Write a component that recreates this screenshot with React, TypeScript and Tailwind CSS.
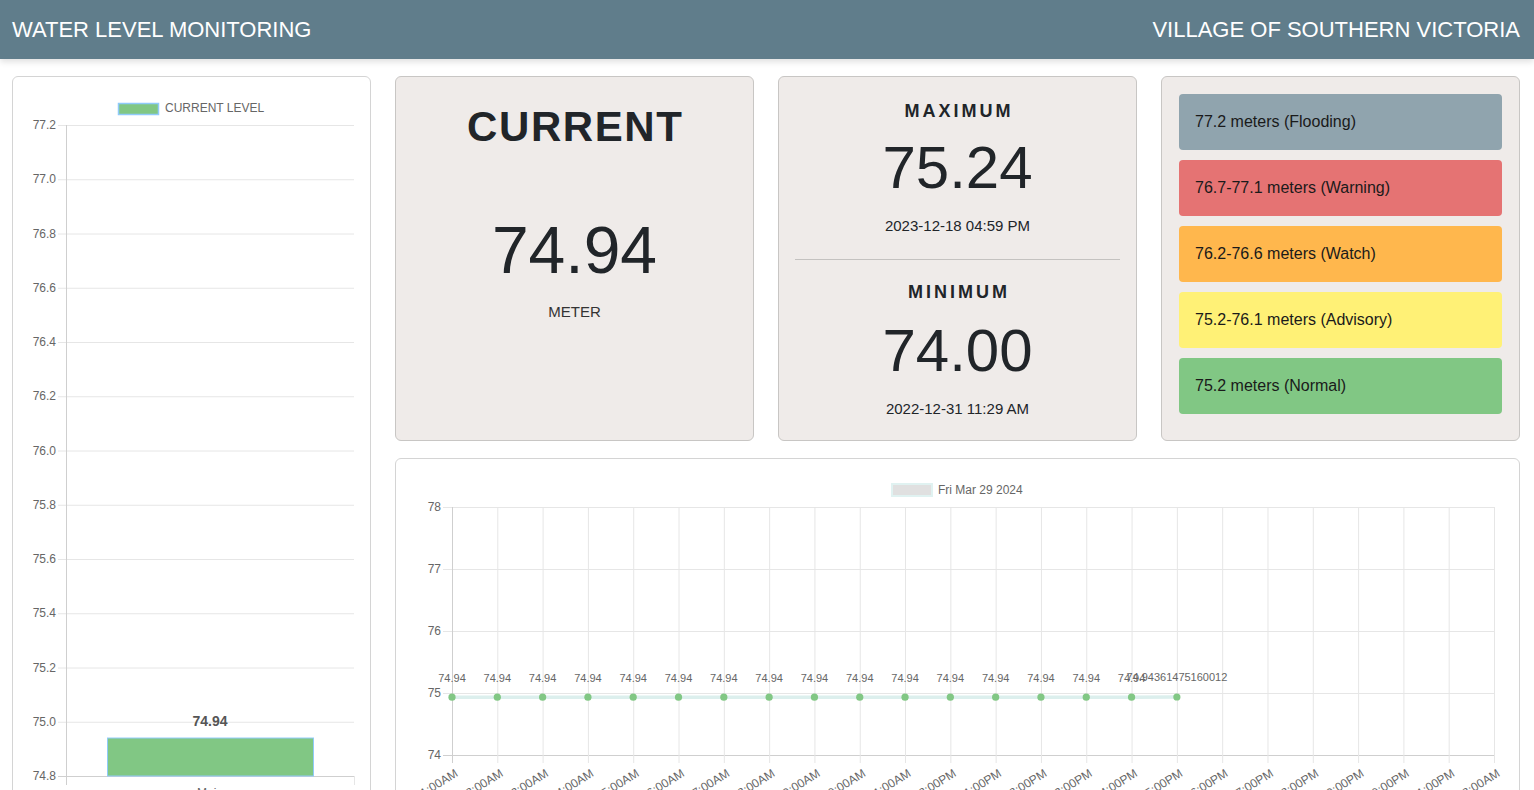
import React from "react";

const levels = [
    { label: "77.2 meters (Flooding)", color: "bg-[#90a4ae]" },
    { label: "76.7-77.1 meters (Warning)", color: "bg-[#e57373]" },
    { label: "76.2-76.6 meters (Watch)", color: "bg-[#ffb74d]" },
    { label: "75.2-76.1 meters (Advisory)", color: "bg-[#fff176]" },
    { label: "75.2 meters (Normal)", color: "bg-[#81c784]" },
];

const hours = [
    "1:00AM", "2:00AM", "3:00AM", "4:00AM", "5:00AM", "6:00AM", "7:00AM", "8:00AM",
    "9:00AM", "10:00AM", "11:00AM", "12:00PM", "1:00PM", "2:00PM", "3:00PM", "4:00PM",
    "5:00PM", "6:00PM", "7:00PM", "8:00PM", "9:00PM", "10:00PM", "11:00PM", "12:00AM",
];

// readings for the day so far
const readings = [
    74.94, 74.94, 74.94, 74.94, 74.94, 74.94, 74.94, 74.94, 74.94, 74.94, 74.94, 74.94,
    74.94, 74.94, 74.94, 74.94, 74.94361475160012,
];

function CurrentLevelChart() {
    const ticks = ["77.2", "77.0", "76.8", "76.6", "76.4", "76.2", "76.0", "75.8", "75.6", "75.4", "75.2", "75.0", "74.8"];
    const top = 48;
    const step = 54.25;
    const bottom = top + step * 12;
    const barTop = bottom - ((74.94 - 74.8) / 0.2) * step;

    return (
        <svg width="357" height="740" className="block">
            {/* legend */}
            <rect x="105.5" y="26.5" width="40" height="11" fill="#81c784" stroke="#90caf9" strokeWidth="1.5" />
            <text x="152" y="35" fontSize="12" fill="#666">CURRENT LEVEL</text>

            {ticks.map((t, i) => {
                const y = top + i * step;
                return (
                    <g key={t}>
                        <line x1="45" x2="341" y1={y + 0.5} y2={y + 0.5} stroke="#e6e6e6" />
                        <text x="43" y={y + 4} fontSize="12" fill="#666" textAnchor="end">{t}</text>
                    </g>
                );
            })}
            <line x1="53.5" x2="53.5" y1={top} y2={bottom + 9} stroke="#cfcfcf" />
            <line x1="341.5" x2="341.5" y1={bottom} y2={bottom + 9} stroke="#e6e6e6" />
            <line x1="45" x2="341" y1={bottom + 0.5} y2={bottom + 0.5} stroke="#cfcfcf" />

            {/* bar */}
            <rect x="94.5" y={barTop} width="206" height={bottom - barTop} fill="#81c784" stroke="#90caf9" strokeWidth="1" />
            <text x="197" y={barTop - 12} fontSize="14" fontWeight="bold" fill="#555" textAnchor="middle">74.94</text>
            <text x="197" y={bottom + 21} fontSize="12" fill="#666" textAnchor="middle">Main</text>
        </svg>
    );
}

function DailyChart() {
    const left = 56;
    const step = (1098 - 56) / 23;
    const top = 48;
    const rowH = 62;
    const yOf = (v: number) => top + (78 - v) * rowH;

    return (
        <svg width="1123" height="358" className="block">
            {/* legend */}
            <rect x="496" y="25" width="40" height="12" fill="#e0e0e0" stroke="#e0f2f1" strokeWidth="2" />
            <text x="542" y="35" fontSize="12" fill="#666">Fri Mar 29 2024</text>

            {[78, 77, 76, 75, 74].map((v, i) => {
                const y = top + i * rowH;
                return (
                    <g key={v}>
                        <line x1="47" x2="1098" y1={y + 0.5} y2={y + 0.5} stroke={i === 4 ? "#cfcfcf" : "#e6e6e6"} />
                        <text x="45" y={y + 4} fontSize="12" fill="#666" textAnchor="end">{v}</text>
                    </g>
                );
            })}

            {hours.map((h, i) => {
                const x = left + i * step;
                return (
                    <g key={h + i}>
                        <line x1={x + 0.5} x2={x + 0.5} y1={top} y2={top + rowH * 4 + 8} stroke={i === 0 ? "#cfcfcf" : "#e6e6e6"} />
                        <text
                            transform={`translate(${x + 2}, ${top + rowH * 4 + 13}) rotate(-32)`}
                            fontSize="12"
                            fill="#666"
                            textAnchor="end"
                            dominantBaseline="hanging"
                        >
                            {h}
                        </text>
                    </g>
                );
            })}

            {/* series */}
            <polyline
                points={readings.map((v, i) => `${left + i * step},${yOf(v) + 0.5}`).join(" ")}
                fill="none"
                stroke="#dcefed"
                strokeWidth="3.5"
            />
            {readings.map((v, i) => (
                <circle key={"p" + i} cx={left + i * step} cy={yOf(v) + 0.5} r="3.6" fill="#81c784" />
            ))}
            {readings.map((v, i) => (
                <text key={"l" + i} x={left + i * step} y={yOf(v) - 15} fontSize="11" fill="#666" textAnchor="middle">
                    {String(v)}
                </text>
            ))}
        </svg>
    );
}

export default function App() {
    return (
        <div className="min-h-screen bg-white font-['Liberation_Sans',Arial,sans-serif] text-[#212529]">
            {/* Header */}
            <header className="h-[59px] bg-[#607d8b] flex items-center justify-between pl-3 pr-[14px] text-white text-[22px] shadow-[0_3px_6px_rgba(0,0,0,0.12)] relative z-10">
                <h1 className="m-0 font-normal">WATER LEVEL MONITORING</h1>
                <span>VILLAGE OF SOUTHERN VICTORIA</span>
            </header>

            <main className="grid grid-cols-[359px_359px_359px_359px] gap-x-6 gap-y-[17px] px-3 pt-[17px] pb-6">
                {/* Bar chart */}
                <section className="row-span-2 bg-white border border-[#d4d4d4] rounded-[6px] overflow-hidden">
                    <CurrentLevelChart />
                </section>

                {/* Current */}
                <section className="h-[365px] bg-[#efebe9] border border-[#c8c6c4] rounded-[6px] flex flex-col items-center">
                    <h2 className="mt-[29px] text-[42px] leading-none font-bold tracking-[1.6px] pl-[1.6px]">CURRENT</h2>
                    <p className="mt-[69px] text-[66px] leading-none">74.94</p>
                    <p className="mt-[21px] text-[15px] leading-none text-[#333]">METER</p>
                </section>

                {/* Max / min */}
                <section className="h-[365px] bg-[#efebe9] border border-[#c8c6c4] rounded-[6px] flex flex-col items-center px-4">
                    <h3 className="mt-[25px] text-[18px] leading-none font-bold tracking-[3px] pl-[3px]">MAXIMUM</h3>
                    <p className="mt-[18px] text-[60px] leading-none">75.24</p>
                    <p className="mt-[20px] text-[15px] leading-none">2023-12-18 04:59 PM</p>
                    <div className="self-stretch mt-[26px] border-t border-[#c4c2c0]" />
                    <h3 className="mt-[23px] text-[18px] leading-none font-bold tracking-[3px] pl-[3px]">MINIMUM</h3>
                    <p className="mt-[20px] text-[60px] leading-none">74.00</p>
                    <p className="mt-[20px] text-[15px] leading-none">2022-12-31 11:29 AM</p>
                </section>

                {/* Levels legend */}
                <section className="h-[365px] bg-[#efebe9] border border-[#c8c6c4] rounded-[6px] p-[17px] flex flex-col gap-[10px]">
                    {levels.map((l) => (
                        <div key={l.label} className={`${l.color} h-[56px] rounded-[4px] pl-4 flex items-center text-[16px] text-[#1a1a1a]`}>
                            {l.label}
                        </div>
                    ))}
                </section>

                {/* Daily line chart */}
                <section className="col-span-3 h-[360px] bg-white border border-[#d4d4d4] rounded-[6px] overflow-hidden">
                    <DailyChart />
                </section>
            </main>
        </div>
    );
}
